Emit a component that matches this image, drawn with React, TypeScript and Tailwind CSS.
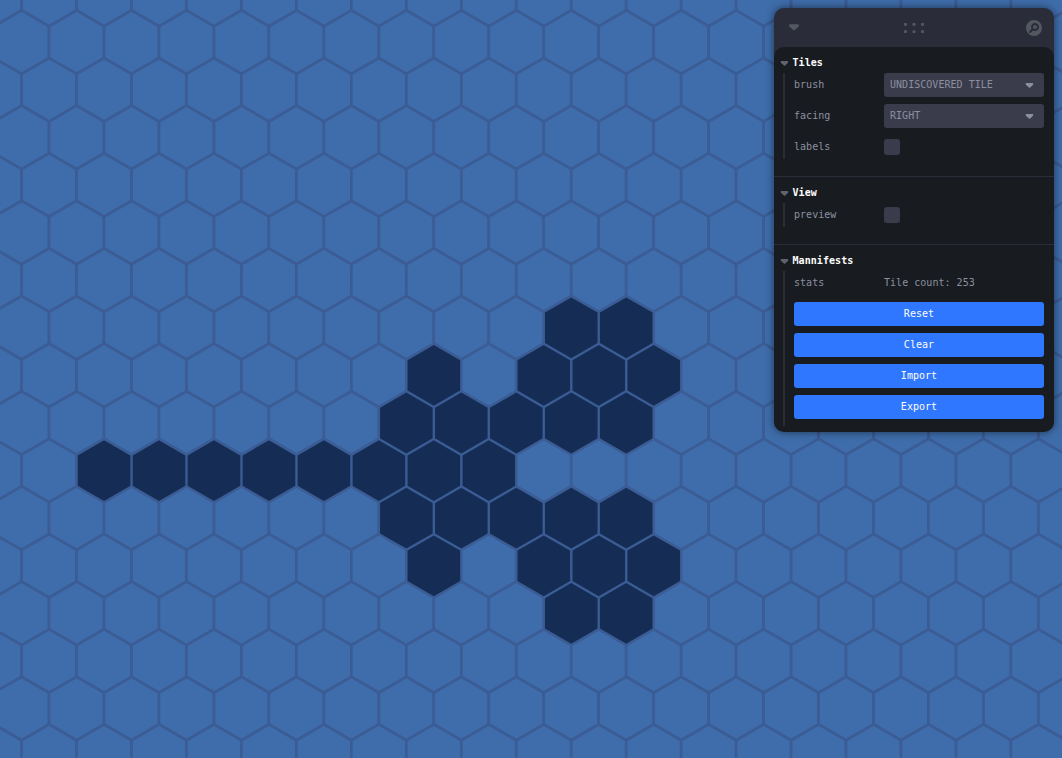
import type { ReactNode } from "react";

const PITCH = 54.965;
const SIDE = PITCH / Math.sqrt(3);
const ROW = SIDE * 1.5;

const DISCOVERED: Record<number, number[]> = {
  6: [10, 11],
  7: [7, 9, 10, 11],
  8: [7, 8, 9, 10, 11],
  9: [1, 2, 3, 4, 5, 6, 7, 8],
  10: [7, 8, 9, 10, 11],
  11: [7, 9, 10, 11],
  12: [10, 11],
};

type Tile = { key: string; cx: number; cy: number; filled: boolean };

const tiles: Tile[] = [];
for (let r = -1; r <= 16; r++) {
  for (let k = -1; k <= 20; k++) {
    tiles.push({
      key: `${r}:${k}`,
      cx: (r % 2 === 0 ? 21.6 : 21.6 + PITCH / 2) + k * PITCH,
      cy: 42.2 + r * ROW,
      filled: DISCOVERED[r]?.includes(k) ?? false,
    });
  }
}

function hexPoints(cx: number, cy: number, s: number) {
  const w = (s * Math.sqrt(3)) / 2;
  return [
    [cx, cy - s],
    [cx + w, cy - s / 2],
    [cx + w, cy + s / 2],
    [cx, cy + s],
    [cx - w, cy + s / 2],
    [cx - w, cy - s / 2],
  ]
    .map(([x, y]) => `${x.toFixed(2)},${y.toFixed(2)}`)
    .join(" ");
}

function HexMap() {
  return (
    <svg className="block h-[758px] w-[1062px]" viewBox="0 0 1062 758">
      {tiles.map((t) => (
        <polygon key={t.key} points={hexPoints(t.cx, t.cy, SIDE)} fill="#3f6dab" stroke="#3b5c94" strokeWidth="2.6" />
      ))}
      {tiles
        .filter((t) => t.filled)
        .map((t) => (
          <polygon key={t.key} points={hexPoints(t.cx, t.cy, SIDE - 1.35)} fill="#152d55" />
        ))}
    </svg>
  );
}

function Caret({ className }: { className: string }) {
  return (
    <svg className={className} width="9" height="5" viewBox="0 0 9 5" fill="currentColor">
      <path d="M3.8 4.4c.4.3 1 .3 1.4 0L8 1.7A1 1 0 007.4 0H1.6a1 1 0 00-.7 1.7l3 2.7z" />
    </svg>
  );
}

function Folder({ title, children, last = false }: { title: string; children: ReactNode; last?: boolean }) {
  return (
    <section className={last ? "pt-[5px] pb-1.5" : "border-b border-[#2b2d3a] pt-[5px] pb-[17px]"}>
      <h2 className="flex h-5 items-center pl-1.5 font-bold tracking-[0.06px] text-[#fefefe]">
        <Caret className="mt-[2px] mr-[3.5px] text-[#60636f]" />
        <span className="pt-[2px]">{title}</span>
      </h2>
      <div
        className={
          last
            ? "mt-px ml-[9px] flex flex-col gap-[7px] border-l-2 border-[#2b2d36] pr-2.5 pb-[7px] pl-[9px]"
            : "mt-px ml-[9px] flex flex-col gap-[7px] border-l-2 border-[#2b2d36] pr-2.5 pl-[9px]"
        }
      >
        {children}
      </div>
    </section>
  );
}

function Row({ label, children }: { label: string; children: ReactNode }) {
  return (
    <div className="flex h-6 items-center">
      <span className="w-[90px]">{label}</span>
      {children}
    </div>
  );
}

function Select({ value }: { value: string }) {
  return (
    <button className="flex h-6 w-40 items-center justify-between rounded-[3px] bg-[#3a3c4b] pr-2.5 pl-1.5">
      <span>{value}</span>
      <Caret className="mt-px" />
    </button>
  );
}

function Checkbox() {
  return <span className="size-4 rounded-[3px] bg-[#3a3c4b]" />;
}

export default function App() {
  return (
    <main className="relative h-[758px] w-[1062px] overflow-hidden bg-[#3f6dab]">
      <HexMap />
      <aside className="absolute top-2 left-[774px] w-[280px] overflow-hidden rounded-[10px] bg-[#2b2c39] font-['DejaVu_Sans_Mono',monospace] text-[10px] leading-none tracking-[0.03px] text-[#8c8fa0] shadow-[0_0_9px_0_#00000088]">
        <header className="flex h-[39px] items-center justify-between pr-2.5 pl-3.5 text-[#535760]">
          <svg width="12" height="7" viewBox="0 0 9 5" fill="currentColor">
            <path d="M3.8 4.4c.4.3 1 .3 1.4 0L8 1.7A1 1 0 007.4 0H1.6a1 1 0 00-.7 1.7l3 2.7z" />
          </svg>
          <svg className="mt-px ml-1" width="20" height="10" viewBox="0 0 28 14" fill="currentColor">
            {[2, 14, 26].map((x) => (
              <g key={x}>
                <circle cx={x} cy="2" r="2.2" />
                <circle cx={x} cy="12" r="2.2" />
              </g>
            ))}
          </svg>
          <svg className="mt-px" width="20" height="20" viewBox="0 0 20 20" fill="currentColor">
            <path d="M9 9a2 2 0 114 0 2 2 0 01-4 0z" />
            <path
              fillRule="evenodd"
              clipRule="evenodd"
              d="M10 18a8 8 0 100-16 8 8 0 000 16zm1-13a4 4 0 00-3.446 6.032l-2.261 2.26a1 1 0 101.414 1.415l2.261-2.261A4 4 0 1011 5z"
            />
          </svg>
        </header>
        <div className="overflow-hidden rounded-[10px] bg-[#181c20]">
          <Folder title="Tiles">
            <Row label="brush">
              <Select value="UNDISCOVERED TILE" />
            </Row>
            <Row label="facing">
              <Select value="RIGHT" />
            </Row>
            <Row label="labels">
              <Checkbox />
            </Row>
          </Folder>
          <Folder title="View">
            <Row label="preview">
              <Checkbox />
            </Row>
          </Folder>
          <Folder title="Mannifests" last>
            <Row label="stats">
              <span>Tile count: 253</span>
            </Row>
            {["Reset", "Clear", "Import", "Export"].map((name) => (
              <button key={name} className="h-6 w-[250px] rounded-[3px] bg-[#3077ff] text-center font-medium text-[#fefefe]">
                {name}
              </button>
            ))}
          </Folder>
        </div>
      </aside>
    </main>
  );
}
